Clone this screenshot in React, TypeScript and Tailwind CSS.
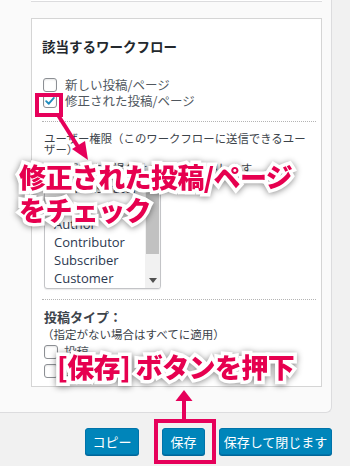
import React from 'react';

const roles = ['Administrator', 'Editor', 'Author', 'Contributor', 'Subscriber', 'Customer'];

function Box({ checked }: { checked?: boolean }) {
  return (
    <span className="w-[14px] h-[14px] shrink-0 rounded-[3px] border border-[#8c8f94] bg-white flex items-center justify-center shadow-[inset_0_1px_2px_rgba(0,0,0,0.1)]">
      {checked && (
        <svg viewBox="0 0 14 14" className="w-[12px] h-[12px]">
          <path d="M2.5 7.2 L5.6 10.2 L11.5 3.4" fill="none" stroke="#1e8cbe" strokeWidth="2.2" strokeLinecap="round" strokeLinejoin="round" />
        </svg>
      )}
    </span>
  );
}

const callout =
  "absolute font-black text-[#e6004f] [font-family:'Noto_Sans_CJK_JP',sans-serif] [-webkit-text-stroke:7px_white] [paint-order:stroke_fill] drop-shadow-[0_1px_3px_rgba(0,0,0,0.45)] whitespace-nowrap";

export default function App() {
  return (
    <div className="relative w-[350px] h-[466px] overflow-hidden bg-[#f1f1f1] text-[#23282d]" style={{ fontFamily: "'Noto Sans CJK JP', sans-serif" }}>
      {/* panel */}
      <div className="w-[332px] h-[413px] bg-[#fafafa] border-r border-b border-[#dcdcde] rounded-br-[6px] pl-[31px] pr-[9px]">
        <div className="h-[2px] border-b border-[#dcdcde] bg-white" />
        <div className="mt-[16px] h-[369px] bg-white border border-[#d5d5d5] pl-[10px] pr-[5px] pt-[17px]">
          <h3 className="text-[13.5px] font-bold leading-[20px] text-[#23282d]">該当するワークフロー</h3>

          <div className="mt-[22px] flex flex-col gap-[2px] text-[12.5px] text-[#50575e]">
            <label className="flex items-center gap-[8px] pl-[1px] h-[14px]">
              <Box />
              <span>新しい投稿/ページ</span>
            </label>
            <label className="flex items-center gap-[8px] pl-[1px] h-[14px]">
              <Box checked />
              <span>修正された投稿/ページ</span>
            </label>
          </div>

          <div className="mt-[13px] border-t border-dotted border-[#b4b4b4]" />

          <p className="mt-[11px] text-[11.4px] leading-[11px] text-[#3c434a] pl-[2px] whitespace-nowrap">
            ユーザー権限（このワークフローに送信できるユー
            <br />
            ザー）
          </p>
          <p className="mt-[6px] text-[11.5px] leading-[14px] text-[#3c434a] pl-[2px]">複数選択する場合は Ctrl キーを押します</p>

          <div className="mt-[4px] ml-[2px] w-[117px] h-[110px] border border-[#c3c4c7] rounded-[3px] bg-white flex overflow-hidden shadow-[0_1px_1px_rgba(0,0,0,0.08)]">
            <div className="flex-1 flex flex-col justify-end pl-[9px] pb-[1px] text-[13px] leading-[18px] text-[#2c3850]" style={{ fontFamily: "'Open Sans', sans-serif" }}>
              {roles.map((r) => (
                <div key={r}>{r}</div>
              ))}
            </div>
            <div className="w-[15px] bg-[#f1f1f1] flex flex-col">
              <div className="h-[74px] mx-[1px] bg-[#c1c1c1]" />
              <div className="flex-1" />
              <div className="h-[16px] flex items-center justify-center">
                <svg viewBox="0 0 8 5" className="w-[8px] h-[5px]">
                  <path d="M0 0 H8 L4 5 Z" fill="#505050" />
                </svg>
              </div>
            </div>
          </div>

          <div className="mt-[10px] border-t border-dotted border-[#b4b4b4]" />

          <p className="mt-[9px] text-[13px] leading-[16px] font-semibold text-[#3c434a] pl-[2px]">投稿タイプ：</p>
          <p className="mt-[1px] text-[11.5px] leading-[16px] text-[#3c434a]">（指定がない場合はすべてに適用）</p>
          <div className="mt-[3px] flex flex-col gap-[5px] text-[12.5px] text-[#50575e] pl-[2px]">
            <label className="flex items-center gap-[6px] h-[14px]">
              <Box />
              <span>投稿</span>
            </label>
            <label className="flex items-center gap-[6px] h-[14px]">
              <Box />
              <span>固定ページ</span>
            </label>
          </div>
        </div>
      </div>

      {/* buttons */}
      <div className="flex justify-end items-center pr-[18px] mt-[15px] text-[13px] text-white">
        <button className="w-[54px] h-[27px] rounded-[3px] bg-[#0085ba] border border-[#0073aa] shadow-[0_1px_0_#006799]">コピー</button>
        <button className="ml-[23px] w-[43px] h-[27px] rounded-[3px] bg-[#0085ba] border border-[#0073aa] shadow-[0_1px_0_#006799]">保存</button>
        <button className="ml-[14px] w-[113px] h-[27px] rounded-[3px] bg-[#0085ba] border border-[#0073aa] shadow-[0_1px_0_#006799]">保存して閉じます</button>
      </div>

      {/* annotations */}
      <div className="absolute left-[35px] top-[93px] w-[28px] h-[24px] border-[4px] border-[#e6005a]" />
      <svg className="absolute left-0 top-0 w-[350px] h-[466px] pointer-events-none" viewBox="0 0 350 466">
        <line x1="58" y1="115" x2="80" y2="150" stroke="#e6005a" strokeWidth="4" />
        <path d="M88 160 L72 149 L85 141 Z" fill="#e6005a" />
        <line x1="184" y1="420" x2="184" y2="398" stroke="#e6005a" strokeWidth="4" />
        <path d="M175.5 401 L184 390 L192.5 401 Z" fill="#e6005a" />
      </svg>
      <div className="absolute left-[154px] top-[419px] w-[62px] h-[45px] border-[4px] border-[#e6005a]" />

      <div className={`${callout} left-[19px] top-[160px] text-[27px] tracking-[-0.6px] leading-[33px]`}>
        修正された投稿/ページ
        <br />
        をチェック
      </div>
      <div className={`${callout} left-[57px] top-[349px] text-[27px] tracking-[-0.6px] leading-[36px]`}>
        [保存] ボタンを押下
      </div>
    </div>
  );
}
